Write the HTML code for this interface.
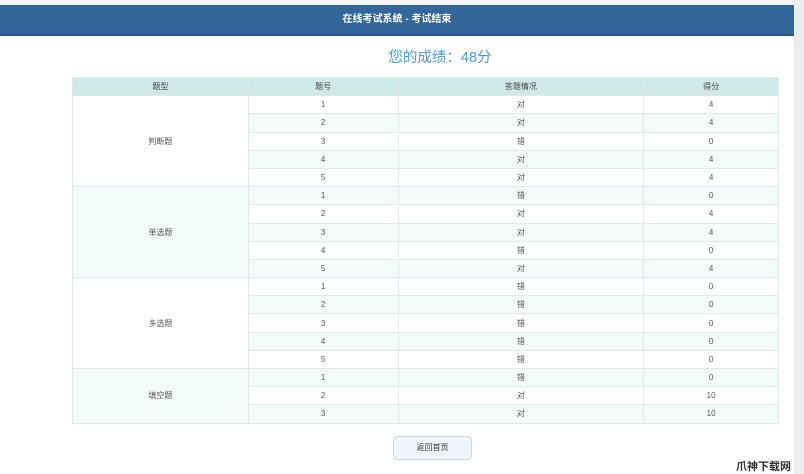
<!DOCTYPE html>
<html><head><meta charset="utf-8"><style>
body{margin:0;width:804px;height:474px;background:#fff;position:relative;overflow:hidden;font-family:"Liberation Sans","Noto Sans CJK SC",sans-serif;}
.top{position:absolute;left:0;top:0;width:804px;height:5px;background:#f4f4f4}
.hdr{position:absolute;left:0;top:5px;width:794px;height:29px;background:#336699;border-bottom:2px solid #2a5580;color:#fff;font-size:10px;font-weight:bold;text-align:center;line-height:29px}
.side{position:absolute;left:794px;top:0;width:10px;height:474px;background:#ececec}
.score{position:absolute;left:0;width:880px;top:46px;text-align:center;color:#4b9ad6;font-size:14.5px}
table{position:absolute;left:72px;top:77px;width:707px;border-collapse:collapse;font-size:8px;color:#555;text-align:center}
td,th{border:1px solid #dfeaea;height:17.2px;padding:0}
th{background:#cfe8e8;font-weight:normal;color:#444}
tr.e td{background:#f3fafa}
td.g{background:#fff!important}
td.gl{background:#f3fafa!important}
.btn{position:absolute;left:393px;top:436px;width:77px;height:22px;border:1px solid #c7d9e8;border-radius:4px;background:#eef4fa;font-size:8px;line-height:22px;text-align:center;color:#333}
.wm{position:absolute;left:736px;top:458px;font-size:11px;color:#333;font-weight:bold}
</style></head><body>
<div class="top"></div>
<div class="hdr">在线考试系统 - 考试结束</div>
<div class="side"></div>
<div class="score">您的成绩：48分</div>
<table>
<colgroup><col style="width:176px"><col style="width:150px"><col style="width:246px"><col style="width:135px"></colgroup>
<tr><th>题型</th><th>题号</th><th>答题情况</th><th>得分</th></tr>
<tr><td rowspan="5" class="g">判断题</td><td>1</td><td>对</td><td>4</td></tr>
<tr class="e"><td>2</td><td>对</td><td>4</td></tr>
<tr><td>3</td><td>错</td><td>0</td></tr>
<tr class="e"><td>4</td><td>对</td><td>4</td></tr>
<tr><td>5</td><td>对</td><td>4</td></tr>
<tr class="e"><td rowspan="5" class="gl">单选题</td><td>1</td><td>错</td><td>0</td></tr>
<tr><td>2</td><td>对</td><td>4</td></tr>
<tr class="e"><td>3</td><td>对</td><td>4</td></tr>
<tr><td>4</td><td>错</td><td>0</td></tr>
<tr class="e"><td>5</td><td>对</td><td>4</td></tr>
<tr><td rowspan="5" class="g">多选题</td><td>1</td><td>错</td><td>0</td></tr>
<tr class="e"><td>2</td><td>错</td><td>0</td></tr>
<tr><td>3</td><td>错</td><td>0</td></tr>
<tr class="e"><td>4</td><td>错</td><td>0</td></tr>
<tr><td>5</td><td>错</td><td>0</td></tr>
<tr class="e"><td rowspan="3" class="gl">填空题</td><td>1</td><td>错</td><td>0</td></tr>
<tr><td>2</td><td>对</td><td>10</td></tr>
<tr class="e"><td>3</td><td>对</td><td>10</td></tr>
</table>
<div class="btn">返回首页</div>
<div class="wm">爪神下载网</div>
</body></html>
